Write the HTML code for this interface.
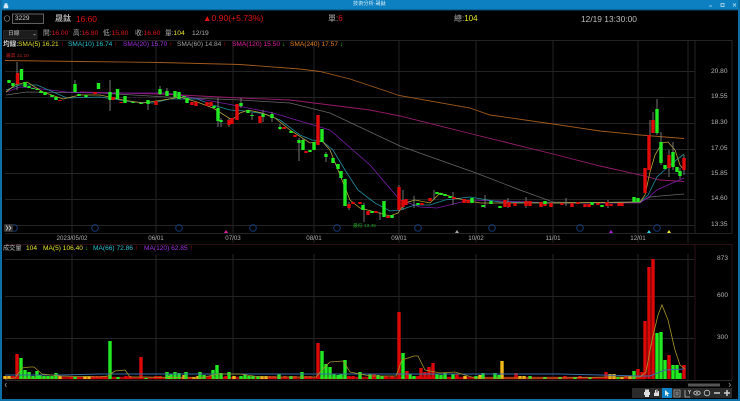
<!DOCTYPE html>
<html><head><meta charset="utf-8"><style>
html,body{margin:0;padding:0;background:#000}
#r{position:relative;width:740px;height:401px;overflow:hidden;background:#000;font-family:"Liberation Sans","Noto Sans CJK TC",sans-serif;color:#bbb}
#r svg{position:absolute;left:0;top:0}
.t{position:absolute;white-space:nowrap;line-height:1}
.y{color:#e6e628}.re{color:#e01414}.w{color:#bbb}
.s{font-size:6.6px}
.h{font-size:6.7px;color:#b0b0b0}
.a{font-size:6.6px;color:#b4b4b4}
.d{font-size:6.2px;color:#b0b0b0;transform:translateX(-50%)}
</style></head><body><div id="r">
<svg width="740" height="401" viewBox="0 0 740 401">
<rect x="0" y="0" width="740" height="9.500" fill="#0c80c0"/>
<rect x="0" y="9.500" width="740" height="1" fill="#0a4a70"/>
<rect x="0" y="0" width="2" height="401" fill="#0c6fa6"/>
<rect x="738" y="0" width="2" height="401" fill="#0c6fa6"/>
<rect x="0" y="399" width="740" height="2" fill="#0c6fa6"/>
<path d="M4 8V5.500h4V8zM4.800 5.500V3.500h2.400v2" fill="#cfe8f5" stroke="#cfe8f5" stroke-width=".5"/>
<path d="M709 6h3M721 3.500h3v3h-3zM733 3.500l3 3M736 3.500l-3 3" stroke="#bfe0f2" fill="none" stroke-width=".8"/>
<circle cx="7" cy="18.500" r="2.800" fill="none" stroke="#888" stroke-width=".7"/>
<rect x="12.500" y="14" width="31" height="9.500" fill="#0a0a0a" stroke="#888" stroke-width=".7"/>
<rect x="3.500" y="30.500" width="33.500" height="8.500" fill="#1c1c1c" stroke="#333" stroke-width=".7"/>
<path d="M33 34l1.500 1.500 1.500-1.500" fill="#888"/>
<g stroke="#242424" stroke-width="1" fill="none">
<path d="M5 40.500H732M5 71.500H695M5 97.500H695M5 123.500H695M5 149.500H695M5 173.500H695M5 199.500H695M5 225.500H695M5 233.500H732"/>
<path d="M5 259.500H695M5 296.500H695M5 338.500H695"/>
<path d="M72 40V243M156 40V243M233 40V243M314 40V243M399 40V243M476 40V243M553 40V243M638 40V243M688 40V243M695 40V233M732 40V233"/>
<path d="M72 254V380M156 254V380M233 254V380M314 254V380M399 254V380M476 254V380M553 254V380M638 254V380M688 254V380"/>
</g>
<path d="M5 244.500H732M695 244V380M732 244V380" stroke="#2c1016" fill="none"/>
<path d="M5 380.500H732" stroke="#2a2a2a" fill="none"/>
<path d="M5 60.500L80 61.500 160 62.500 240 64.500 300 69 320 71.500 350 79 383 90 399 95.500 470 108 490 115 553 124 600 131 640 135 684 138.500" stroke="#a05a1c" fill="none" stroke-width=".9"/>
<path d="M80 92L160 94 240 98 290 100 370 110 400 116 476 135 553 154 600 166 640 175 660 180 684 181.500" stroke="#981a6c" fill="none" stroke-width=".9"/>
<path d="M6 95L27 92 100 93 167 97 240 100 290 103 330 113 400 146 476 173 520 190 553 202 600 203 640 202 650 197 660 196 684 194" stroke="#666" fill="none" stroke-width=".8"/>
<path d="M6 92L20 87 33 88 67 92 100 93 167 93 233 105 273 113 330 130 370 165 400 200 420 207 437 208 470 200 500 201 560 203 640 203 650 196 657 190 670 184 684 178" stroke="#7a1cA8" fill="none" stroke-width=".8"/>
<path d="M6 90L20 85 37 85 67 98 100 97 133 102 153 103 170 99 197 99 213 105 230 110 245 111 265 114 280 120 300 135 312 140 322 141 333 150 345 170 358 190 375 203 390 211 400 210 415 205 430 205 445 200 470 197 500 202 560 203 640 202 648 195 657 177 670 165 684 154" stroke="#2090a0" fill="none" stroke-width=".8"/>
<path d="M6 92L15 85 27 82 43 92 63 99 80 95 100 95 123 100 143 103 163 100 180 97 197 102 213 108 232 120 240 113 248 110 262 113 275 118 290 130 310 143 322 141 330 150 340 175 350 200 360 208 375 212 390 216 398 213 405 203 415 200 430 203 440 193 455 198 480 203 560 203 640 202 645 195 650 172 655 155 662 143 668 142 675 150 680 165 684 170" stroke="#b8a038" fill="none" stroke-width=".8"/>
<path d="M17 62V90M75 80V92M110 80V111M148 100V110M167 88V96M160 86V95M218 98V127M221 118V127M241 98V108M252 113V120M263 110V122M272 112V122M280 124V130M299 138V161M303 138V150M326 152V162M364 203V222M380 212V220M399 185V212M403 190V210M414 196V208M434 190V200M453 192V205M485 195V208M508 198V208M526 197V208M566 198V206M608 200V208M650 120V136M653 112V133M657 99V135M661 132V165M669 150V177M673 142V170M680 168V179M684 155V175M349 202V210M229 118V127" stroke="#808080" stroke-width=".9" fill="none"/>
<path d="M9 80V83M13 83V86M21.500 69V80M25 82V87M29 86V88M33 88V89M37 89V90M41 91V93M45 92V95M52 95V97M56 97V100M75 84V92M79 94V96M86 95V97M98.500 83V89M110 92V100M117.500 89V99M125 96V103M133 102V103M141 103V104M148 100V104M160 89V94M167 91V96M175 91V97M179 92V99M184 96V97M187 98V103M214 106V108M218 108V121M221 120V122M241 103V106M248 110V113M252 115V116M263 114V117M272 114V118M280 127V129M291 131V133M299 140V143M303 140V150M310 150V152M314 142V150M322 129V142M326 154V157M333 158V163M338 164V169M341 171V178M345 179V206M363 205V210M372 211V213M384 201V217M392 215V218M418 203V205M437 192V194M441 193V195M445 194V196M450 196V198M472 198V203M483 205V207M491 201V204M500 206V208M545 201V204M592 202V205M602 205V207M634 197V202M638 198V202M657 109V133M661 142V163M665 165V169M673 152V167M677 167V172M680 171V176" stroke="#22ea22" stroke-width="3.400" fill="none"/>
<path d="M17.500 73V84M60 100V101M95 92V94M113 97V100M121 102V103M156 101V105M192 102V105M196 102V106M207 102V106M211 102V106M229 120V125M232 118V124M237 104V120M260 116V123M284 127V129M295 135V137M306 151V153M318 115V145M349 204V208M353 202V204M360 202V204M368 211V215M376 211V213M388 216V218M399 187V210M403 200V207M406 199V205M422 203V205M430 198V201M454 197V199M464 199V203M468 200V203M505 200V207M509 202V207M515 203V206M526 201V206M530 201V206M541 202V207M545 204V206M551 203V207M562 203V205M572 203V207M578 202V204M585 204V207M589 204V207M598 203V205M607 202V206M611 204V206M619 203V206M622 203V206M645 168V193M649 135V170M653 120V133M669 155V168M684 158V170" stroke="#e00a0a" stroke-width="3.400" fill="none"/>
<path d="M5 378H645" stroke="#b00606" stroke-width="2.400" fill="none"/>
<path d="M5 379V376M9 379V376M60 379V376M85 379V376M89 379V376M502 379V361M520 379V376M524 379V376M610 379V374M614 379V374M630 379V376M622 379V377M480 379V375M168 379V376M184 379V375M194 379V377M198 379V376M234 379V376M262 379V376M266 379V376M465 379V376" stroke="#f0b818" stroke-width="3.400" fill="none"/>
<path d="M21 379V358M25 379V370M29 379V372M33 379V376M37 379V371M40 379V375M44 379V376M48 379V376M52 379V376M56 379V373M75 379V377M110 379V341M118 379V377M146 379V378M167 379V372M171 379V374M175 379V372M179 379V373M186 379V372M200 379V372M204 379V375M213 379V370M217 379V365M221 379V373M229 379V372M241 379V376M245 379V375M249 379V376M253 379V376M258 379V376M279 379V374M291 379V376M302 379V372M322 379V351M326 379V364M330 379V367M334 379V374M338 379V375M341 379V374M345 379V360M360 379V372M370 379V374M378 379V375M382 379V376M403 379V353M410 379V374M414 379V376M437 379V374M441 379V375M445 379V373M453 379V374M476 379V376M483 379V373M495 379V373M499 379V375M530 379V376M545 379V377M560 379V377M575 379V377M590 379V377M618 379V377M634 379V371M657 379V333M661 379V332M665 379V360M673 379V365M677 379V365M680 379V373" stroke="#22ea22" stroke-width="3.400" fill="none"/>
<path d="M13 379V376M17 379V354M71 379V377M79 379V377M93 379V376M97 379V376M101 379V376M105 379V376M126 379V376M130 379V376M141 379V357M156 379V376M160 379V376M190 379V377M210 379V376M226 379V376M270 379V376M274 379V376M285 379V376M295 379V376M306 379V376M310 379V376M318 379V343M349 379V376M353 379V376M374 379V374M386 379V376M392 379V376M399 379V312M407 379V371M418 379V376M421 379V368M425 379V372M429 379V367M433 379V363M449 379V377M457 379V374M516 379V373M565 379V376M580 379V376M606 379V372M626 379V376M638 379V369M642 379V372M645 379V321M649 379V267M653 379V259M669 379V355M684 379V365" stroke="#dc0808" stroke-width="3.400" fill="none"/>
<path d="M5 375H60L100 374H340L399 374H560L640 376H650L665 370 684 369" stroke="#3a6aa8" stroke-width="1" fill="none"/>
<path d="M5 379L15 378 22 368 30 367 34 367 42 374 60 376 100 377 108 376 115 371 125 370 130 377 145 377 200 378 218 374 240 374 260 377 316 377 322 370 330 362 343 361 350 372 370 376 396 376 402 360 414 356 418 356 425 370 440 373 455 372 475 378 560 378 610 377 640 377 646 372 652 340 658 315 662 305 668 320 675 350 680 365 685 369" stroke="#a89428" stroke-width=".8" fill="none"/>
<g fill="none" stroke="#143c78" stroke-width="1">
<circle cx="14" cy="228" r="3.300"/><circle cx="95" cy="228" r="3.300"/><circle cx="179" cy="228" r="3.300"/><circle cx="253" cy="228" r="3.300"/><circle cx="337" cy="228" r="3.300"/><circle cx="418" cy="228" r="3.300"/><circle cx="492" cy="228" r="3.300"/><circle cx="580" cy="228" r="3.300"/><circle cx="657" cy="228" r="3.300"/>
</g>
<rect x="4" y="224" width="9" height="8" rx="1" fill="#333"/>
<path d="M6 225.500l2 2.500-2 2.500M9 225.500l2 2.500-2 2.500" stroke="#ddd" stroke-width=".8" fill="none"/>
<path d="M224 233l2-3 2 3z" fill="#e020a0"/><path d="M455 233l2-3 2 3z" fill="#aaa"/><path d="M609 233l2-3 2 3z" fill="#b020e0"/><path d="M647 233l2-3 2 3z" fill="#30d0e0"/><path d="M667 233l2-3 2 3z" fill="#f0e040"/>
<path d="M6.500 383l-1.500 2 1.500 2M729 383l1.500 2-1.500 2" stroke="#999" stroke-width=".7" fill="none"/>
<rect x="688" y="383.500" width="32" height="3" fill="#555"/>
<rect x="632" y="388" width="100" height="10" fill="#2a2a2a"/>
<rect x="662" y="388" width="10" height="10" fill="#0c80c8"/>
<path d="M665 390v6l1.500-1.500 1 2 1-.5-1-2h2z" fill="#e8f4fb"/>
<path d="M644 392h6v3h-6zM645 389.500h4v2.500h-4zM645 394.500h4v2.500h-4z" fill="#ddd"/>
<path d="M654 393v3h5v-5h-1v1.500h-.500v-3h-1v3h-.500v-2.500h-1v3l-.500-.500z" fill="#ddd"/>
<path d="M674 390h6v7h-6zM676 392h2v3h-2z" fill="none" stroke="#aaa" stroke-width=".8"/>
<path d="M685 390v7h5M688 390l1.500 2 1.500-2M689.500 392v2" fill="none" stroke="#bbb" stroke-width=".8"/>
<ellipse cx="697" cy="393" rx="3.200" ry="2" fill="none" stroke="#ddd" stroke-width=".8"/><circle cx="697" cy="393" r=".9" fill="#ddd"/>
<circle cx="707" cy="393" r="2.800" fill="none" stroke="#ccc" stroke-width=".8"/>
<path d="M714 393h6M724 393h6M727 390v6" stroke="#ccc" stroke-width="1.500" fill="none"/>
</svg>
<div class="t" style="left:353px;top:2px;font-size:5.200px;color:#d4ecf8;">技術分析-晟鈦</div>
<div class="t" style="left:15px;top:15.500px;font-size:6.500px;color:#ccc;">3229</div>
<div class="t" style="left:55px;top:14.500px;font-size:8px;font-weight:bold;color:#aaa;">晟鈦</div>
<div class="t re" style="left:76px;top:14.500px;font-size:8.400px;">16.60</div>
<div class="t re" style="left:203px;top:14px;font-size:8.600px;">▲0.90(+5.73%)</div>
<div class="t" style="left:328px;top:14.500px;font-size:8px;color:#aaa;">單:<span class="re">6</span></div>
<div class="t" style="left:454px;top:14.500px;font-size:8px;color:#aaa;">總:<span class="y">104</span></div>
<div class="t" style="left:581px;top:14.500px;font-size:8.400px;color:#bbb;">12/19 13:30:00</div>
<div class="t" style="left:8px;top:31.500px;font-size:5.800px;color:#bbb;">日線</div>
<div class="t h" style="left:43px;top:31px;">開:<span class="re">16.00</span></div>
<div class="t h" style="left:73px;top:31px;">高:<span class="re">16.80</span></div>
<div class="t h" style="left:103px;top:31px;">低:<span class="re">15.80</span></div>
<div class="t h" style="left:135px;top:31px;">收:<span class="re">16.60</span></div>
<div class="t h" style="left:165px;top:31px;">量:<span class="y">104</span></div>
<div class="t h" style="left:192px;top:31px;">12/19</div>
<div class="t s" style="left:3px;top:42px;color:#ccc;font-weight:bold;">均線:</div>
<div class="t s" style="left:18px;top:42px;color:#e0e030;">SMA(5) 16.21 <span class="re">↑</span></div>
<div class="t s" style="left:68px;top:42px;color:#28c0d0;">SMA(10) 16.74 <span class="re">↑</span></div>
<div class="t s" style="left:123px;top:42px;color:#a030e0;">SMA(20) 15.70 <span class="re">↑</span></div>
<div class="t s" style="left:177px;top:42px;color:#a0a0a0;">SMA(60) 14.84 <span class="re">↑</span></div>
<div class="t s" style="left:232px;top:42px;color:#e020a0;">SMA(120) 15.50 <span style="color:#20c020">↓</span></div>
<div class="t s" style="left:290px;top:42px;color:#e08020;">SMA(240) 17.57 <span style="color:#20c020">↓</span></div>
<div class="t" style="left:6px;top:54.500px;font-size:4.800px;color:#c02020;">最高 21.10</div>
<div class="t" style="left:353px;top:224.500px;font-size:4.800px;color:#20a020;">最低 13.45</div>
<div class="t a" style="left:711px;top:68.500px;">20.80</div>
<div class="t a" style="left:711px;top:94px;">19.55</div>
<div class="t a" style="left:711px;top:120px;">18.30</div>
<div class="t a" style="left:711px;top:146px;">17.05</div>
<div class="t a" style="left:711px;top:171px;">15.85</div>
<div class="t a" style="left:711px;top:196px;">14.60</div>
<div class="t a" style="left:711px;top:222px;">13.35</div>
<div class="t a" style="left:717px;top:256px;">873</div>
<div class="t a" style="left:717px;top:293px;">600</div>
<div class="t a" style="left:717px;top:335px;">300</div>
<div class="t d" style="left:72px;top:236px;">2023/05/02</div>
<div class="t d" style="left:156px;top:236px;">06/01</div>
<div class="t d" style="left:233px;top:236px;">07/03</div>
<div class="t d" style="left:314px;top:236px;">08/01</div>
<div class="t d" style="left:399px;top:236px;">09/01</div>
<div class="t d" style="left:476px;top:236px;">10/02</div>
<div class="t d" style="left:553px;top:236px;">11/01</div>
<div class="t d" style="left:638px;top:236px;">12/01</div>
<div class="t s" style="left:3px;top:246px;color:#bbb;font-size:6.200px;">成交量</div>
<div class="t s y" style="left:26px;top:246px;">104</div>
<div class="t s y" style="left:43px;top:246px;">MA(5) 106.40 <span style="color:#20c020">↓</span></div>
<div class="t s" style="left:93px;top:246px;color:#28c0d0;">MA(66) 72.86 <span class="re">↑</span></div>
<div class="t s" style="left:144px;top:246px;color:#a030e0;">MA(120) 62.85 <span class="re">↑</span></div>
</div></body></html>
